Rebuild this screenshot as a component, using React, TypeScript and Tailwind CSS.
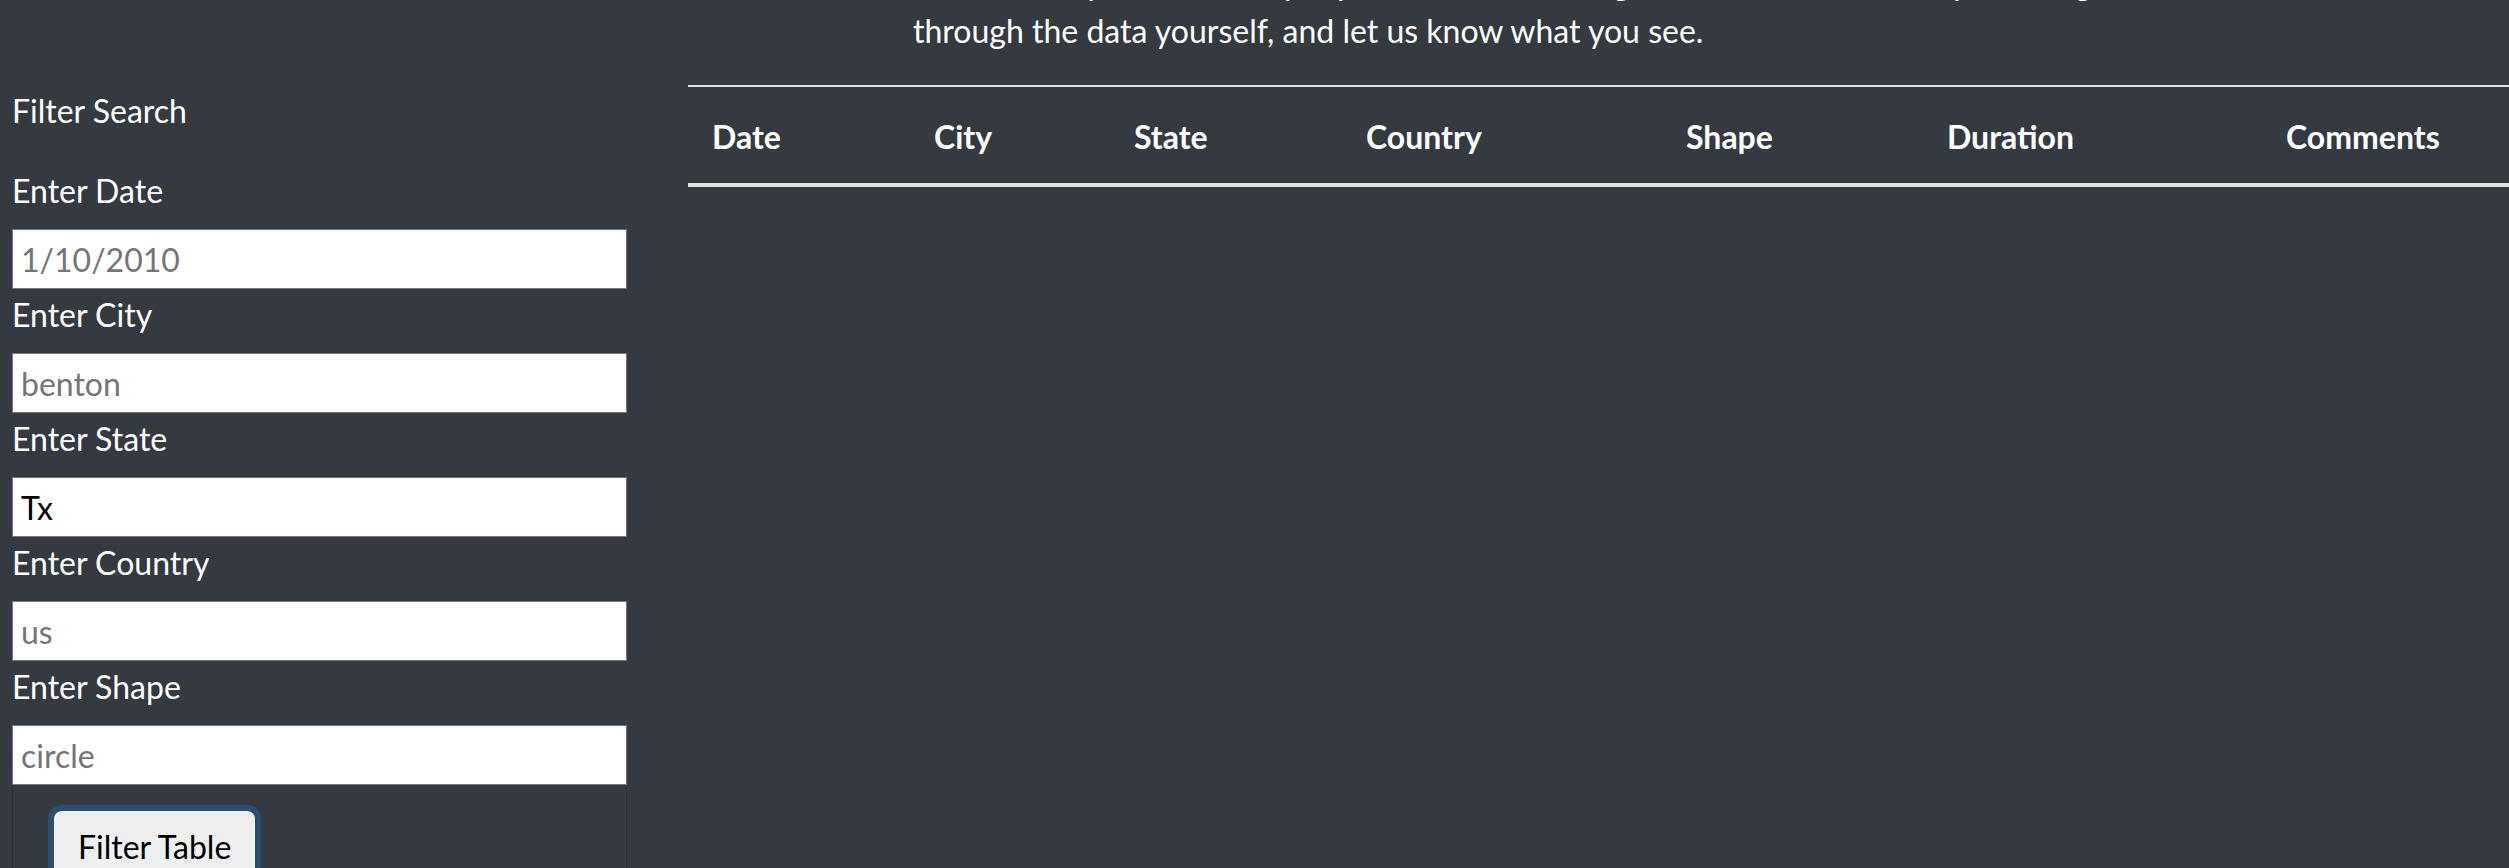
const fields = [
  { label: 'Enter Date', placeholder: '1/10/2010', value: '' },
  { label: 'Enter City', placeholder: 'benton', value: '' },
  { label: 'Enter State', placeholder: 'tx', value: 'Tx' },
  { label: 'Enter Country', placeholder: 'us', value: '' },
  { label: 'Enter Shape', placeholder: 'circle', value: '' },
];

const columns = [
  { name: 'Date', width: 'w-[222px]' },
  { name: 'City', width: 'w-[200px]' },
  { name: 'State', width: 'w-[232px]' },
  { name: 'Country', width: 'w-[320px]' },
  { name: 'Shape', width: 'w-[261px]' },
  { name: 'Duration', width: 'w-[339px]' },
  { name: 'Comments', width: 'w-[247px]' },
];

export default function App() {
  return (
    <div className="h-[868px] w-full overflow-hidden bg-[#343a40] font-['Lato',sans-serif] text-[32px] leading-[48px] text-white">
      {/* intro text, page is scrolled so the first line sits above the fold */}
      <p className="-mt-[41px] mb-[30px] ml-[913px] whitespace-nowrap">
        Find out for yourself what people have been seeing in the skies. We invite you to dig
        <br />
        through the data yourself, and let us know what you see.
      </p>

      <div className="flex">
        <aside className="w-[688px] shrink-0 pl-[12px] pr-[61px]">
          <h5 className="mb-[30px] pt-[2px]">Filter Search</h5>
          <form onSubmit={(e) => e.preventDefault()}>
            {fields.map((f) => (
              <div key={f.label}>
                <label className="mb-[14px] block pt-[2px]">{f.label}</label>
                <input
                  type="text"
                  defaultValue={f.value}
                  placeholder={f.placeholder}
                  className="block h-[60px] w-full border border-[#767676] bg-white px-[8px] text-[32px] text-black placeholder:text-[#757575] focus:outline-none"
                />
              </div>
            ))}
            <div className="border-x border-[#2a2e35] pl-[41px] pt-[26px] pb-[40px]">
              <button
                type="submit"
                className="rounded-[8px] bg-[#efefef] px-[24px] py-[12px] text-black shadow-[0_0_0_6px_#2c4e75]"
              >
                Filter Table
              </button>
            </div>
          </form>
        </aside>

        <main className="min-w-0 flex-1">
          <table className="w-[1821px] table-fixed border-collapse">
            <thead>
              <tr className="border-t-2 border-b-4 border-[#dee2e6]">
                {columns.map((c) => (
                  <th key={c.name} className={`${c.width} px-[24px] pt-[26px] pb-[22px] text-left font-bold`}>
                    {c.name}
                  </th>
                ))}
              </tr>
            </thead>
            <tbody></tbody>
          </table>
        </main>
      </div>
    </div>
  );
}
